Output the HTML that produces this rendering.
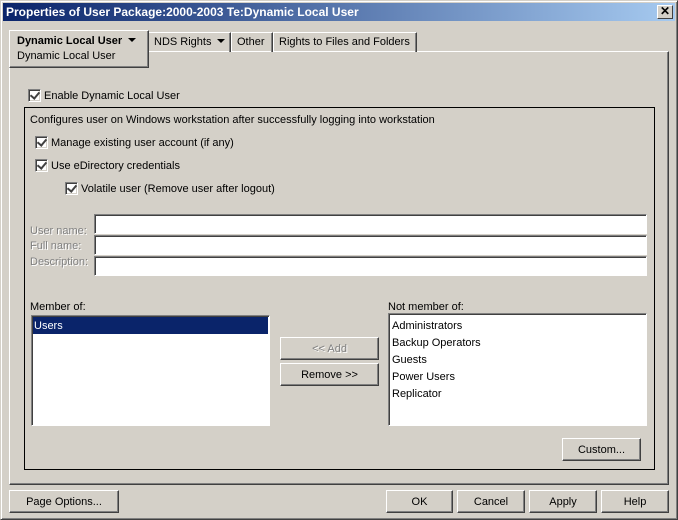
<!DOCTYPE html>
<html><head><style>
*{box-sizing:border-box;margin:0;padding:0}
body{width:678px;height:520px;background:#d4d0c8;font-family:"Liberation Sans",sans-serif;font-size:11px;color:#000;position:relative;overflow:hidden}
.a{position:absolute}
.win{left:0;top:0;width:678px;height:520px;border:1px solid;border-color:#d4d0c8 #404040 #404040 #d4d0c8;box-shadow:inset 1px 1px #fff,inset -1px -1px #808080}
.title{left:3px;top:3px;width:672px;height:18px;background:linear-gradient(90deg,#0a246a,#a6caf0);color:#fff;font-weight:bold;font-size:12px;padding:2px 0 0 3px}
.close{right:5px;top:5px;width:16px;height:14px;background:#d4d0c8;border:1px solid;border-color:#fff #404040 #404040 #fff;color:#000;font-size:12px;line-height:11px;text-align:center;font-weight:bold}
.panel{left:9px;top:51px;width:660px;height:434px;border:1px solid;border-color:#fff #404040 #404040 #fff;box-shadow:inset -1px -1px #808080}
.tab{top:32px;height:20px;border:1px solid;border-color:#fff #404040 transparent #fff;border-bottom:none;padding:3px 5px 0 5px;white-space:nowrap;box-shadow:inset -1px 0 #808080}
.tab1{left:9px;top:30px;width:140px;height:38px;border:1px solid;border-color:#fff #404040 #404040 #fff;background:#d4d0c8;padding:4px 7px 0 7px;box-shadow:inset -1px -1px #808080;z-index:2}
.tri{display:inline-block;width:0;height:0;border-left:4px solid transparent;border-right:4px solid transparent;border-top:4px solid #000;margin-left:6px;vertical-align:2px}
.cb{width:13px;height:13px;background:#fff;border:1px solid;border-color:#808080 #fff #fff #808080;box-shadow:inset 1px 1px #404040,inset -1px -1px #d4d0c8}
.cb:after{content:"";position:absolute;left:3px;top:0px;width:4px;height:7px;border:solid #404040;border-width:0 2px 2px 0;transform:rotate(40deg)}
.grp{left:24px;top:107px;width:631px;height:363px;border:1px solid #000}
.in{background:#fff;border:1px solid;border-color:#808080 #fff #fff #808080;box-shadow:inset 1px 1px #404040}
.btn{height:23px;border:1px solid;border-color:#fff #404040 #404040 #fff;box-shadow:inset -1px -1px #808080;text-align:center;line-height:22px}
.g{color:#808080;text-shadow:1px 1px #fff}
</style></head><body>
<div class="a win"></div>
<div class="a title">Properties of User Package:2000-2003 Te:Dynamic Local User</div>
<div class="a close">✕</div>
<div class="a panel"></div>
<div class="a tab1"><b>Dynamic Local User</b><span class="tri"></span><br><div style="margin-top:3px">Dynamic Local User</div></div>
<div class="a tab" style="left:148px;width:83px">NDS Rights<span class="tri"></span></div>
<div class="a tab" style="left:231px;width:42px">Other</div>
<div class="a tab" style="left:273px;width:144px">Rights to Files and Folders</div>
<div class="a cb" style="left:28px;top:89px"></div><div class="a" style="left:44px;top:90px">Enable Dynamic Local User</div>
<div class="a grp"></div>
<div class="a" style="left:30px;top:114px">Configures user on Windows workstation after successfully logging into workstation</div>
<div class="a cb" style="left:35px;top:136px"></div><div class="a" style="left:51px;top:137px">Manage existing user account (if any)</div>
<div class="a cb" style="left:35px;top:159px"></div><div class="a" style="left:51px;top:160px">Use eDirectory credentials</div>
<div class="a cb" style="left:65px;top:182px"></div><div class="a" style="left:81px;top:183px">Volatile user (Remove user after logout)</div>
<div class="a g" style="left:30px;top:225px">User name:</div>
<div class="a g" style="left:30px;top:240px">Full name:</div>
<div class="a g" style="left:30px;top:256px">Description:</div>
<div class="a in" style="left:94px;top:214px;width:553px;height:20px"></div>
<div class="a in" style="left:94px;top:235px;width:553px;height:20px"></div>
<div class="a in" style="left:94px;top:256px;width:553px;height:20px"></div>
<div class="a" style="left:30px;top:301px">Member of:</div>
<div class="a in" style="left:31px;top:315px;width:239px;height:111px"><div style="margin:1px;background:#0a246a;color:#fff;height:17px;padding:3px 0 0 1px">Users</div></div>
<div class="a btn g" style="left:280px;top:337px;width:99px">&lt;&lt; Add</div>
<div class="a btn" style="left:280px;top:363px;width:99px">Remove &gt;&gt;</div>
<div class="a" style="left:388px;top:301px">Not member of:</div>
<div class="a in" style="left:388px;top:313px;width:259px;height:113px;padding:4px 0 0 3px;line-height:17px">Administrators<br>Backup Operators<br>Guests<br>Power Users<br>Replicator</div>
<div class="a btn" style="left:562px;top:438px;width:79px">Custom...</div>
<div class="a btn" style="left:9px;top:490px;width:110px">Page Options...</div>
<div class="a btn" style="left:386px;top:490px;width:67px">OK</div>
<div class="a btn" style="left:457px;top:490px;width:68px">Cancel</div>
<div class="a btn" style="left:529px;top:490px;width:68px">Apply</div>
<div class="a btn" style="left:601px;top:490px;width:68px">Help</div>
</body></html>
